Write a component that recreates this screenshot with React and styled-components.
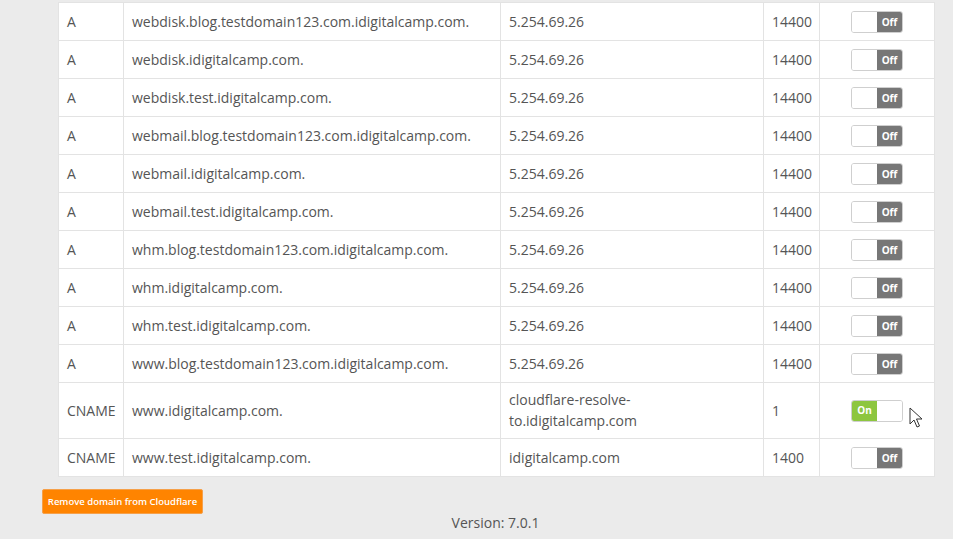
import styled, { createGlobalStyle } from 'styled-components';

const GlobalStyle = createGlobalStyle`
  body {
    margin: 0;
    background: #ebebeb;
    font-family: "Open Sans", "Noto Sans", sans-serif;
    color: #555;
  }
`

const Page = styled.div`
  position: relative;
  width: 953px;
  height: 539px;
  padding-top: 2px;
  box-sizing: border-box;
  overflow: hidden;
`
const Table = styled.table`
  margin-left: 58px;
  width: 876px;
  border-collapse: collapse;
  background: #fff;
  table-layout: fixed;
  font-size: 14px;
`
const Cell = styled.td`
  border: 1px solid #e3e3e3;
  padding: ${props => props.tall ? '6px 8px 7px' : '0 8px'};
  height: ${props => props.tall ? '42px' : '37px'};
  line-height: 21px;
  vertical-align: middle;
  text-align: ${props => props.center ? 'center' : 'left'};
`
const Toggle = styled.div`
  display: inline-flex;
  width: 52px;
  height: 22px;
  border: 1px solid #cfcfcf;
  border-radius: 3px;
  overflow: hidden;
  box-sizing: border-box;
  vertical-align: middle;
`
const Half = styled.span`
  flex: 1;
  display: flex;
  align-items: center;
  justify-content: center;
  font-size: 10px;
  font-weight: 700;
  color: #fff;
  background: ${props => props.on ? '#8dc63f' : props.off ? '#777' : '#fff'};
`
const Footer = styled.div`
  position: relative;
  height: 63px;
`
const RemoveButton = styled.button`
  position: absolute;
  left: 42px;
  top: 12px;
  width: 161px;
  height: 25px;
  border: 1px solid #f5a04a;
  border-radius: 2px;
  background: #ff8400;
  color: #fff;
  font-family: "Open Sans", "Noto Sans", sans-serif;
  font-size: 9.5px;
  font-weight: 600;
  padding: 0;
`
const Version = styled.div`
  position: absolute;
  left: 0;
  right: 0;
  top: 36px;
  text-align: center;
  font-size: 14px;
  padding-left: 38px;
`
const Cursor = styled.svg`
  position: absolute;
  left: 909px;
  top: 407px;
`

const rows = [
  ['A', 'webdisk.blog.testdomain123.com.idigitalcamp.com.', '5.254.69.26', '14400', false],
  ['A', 'webdisk.idigitalcamp.com.', '5.254.69.26', '14400', false],
  ['A', 'webdisk.test.idigitalcamp.com.', '5.254.69.26', '14400', false],
  ['A', 'webmail.blog.testdomain123.com.idigitalcamp.com.', '5.254.69.26', '14400', false],
  ['A', 'webmail.idigitalcamp.com.', '5.254.69.26', '14400', false],
  ['A', 'webmail.test.idigitalcamp.com.', '5.254.69.26', '14400', false],
  ['A', 'whm.blog.testdomain123.com.idigitalcamp.com.', '5.254.69.26', '14400', false],
  ['A', 'whm.idigitalcamp.com.', '5.254.69.26', '14400', false],
  ['A', 'whm.test.idigitalcamp.com.', '5.254.69.26', '14400', false],
  ['A', 'www.blog.testdomain123.com.idigitalcamp.com.', '5.254.69.26', '14400', false],
  ['CNAME', 'www.idigitalcamp.com.', ['cloudflare-resolve-', 'to.idigitalcamp.com'], '1', true],
  ['CNAME', 'www.test.idigitalcamp.com.', 'idigitalcamp.com', '1400', false],
]

const Switch = ({on}) => (
  <Toggle>
    {on ? <><Half on>On</Half><Half /></> : <><Half /><Half off>Off</Half></>}
  </Toggle>
)

const App = () => {
  return (
    <>
      <GlobalStyle />
      <Page>
        <Table>
          <colgroup>
            <col style={{width: 65}} />
            <col style={{width: 377}} />
            <col style={{width: 263}} />
            <col style={{width: 56}} />
            <col style={{width: 115}} />
          </colgroup>
          <tbody>
            {rows.map((r, i) => {
              const tall = Array.isArray(r[2]);
              return (
                <tr key={i}>
                  <Cell tall={tall}>{r[0]}</Cell>
                  <Cell tall={tall}>{r[1]}</Cell>
                  <Cell tall={tall}>{tall ? <>{r[2][0]}<br />{r[2][1]}</> : r[2]}</Cell>
                  <Cell tall={tall}>{r[3]}</Cell>
                  <Cell tall={tall} center><Switch on={r[4]} /></Cell>
                </tr>
              )
            })}
          </tbody>
        </Table>
        <Footer>
          <RemoveButton>Remove domain from Cloudflare</RemoveButton>
          <Version>Version: 7.0.1</Version>
        </Footer>
        <Cursor width="14" height="22" viewBox="0 0 14 22">
          <path d="M1 1 L1 17 L5 13 L8 20 L10.5 19 L7.5 12 L13 12 Z" fill="#fff" stroke="#333" strokeWidth="1" strokeLinejoin="round" />
        </Cursor>
      </Page>
    </>
  )
}

export default App;
